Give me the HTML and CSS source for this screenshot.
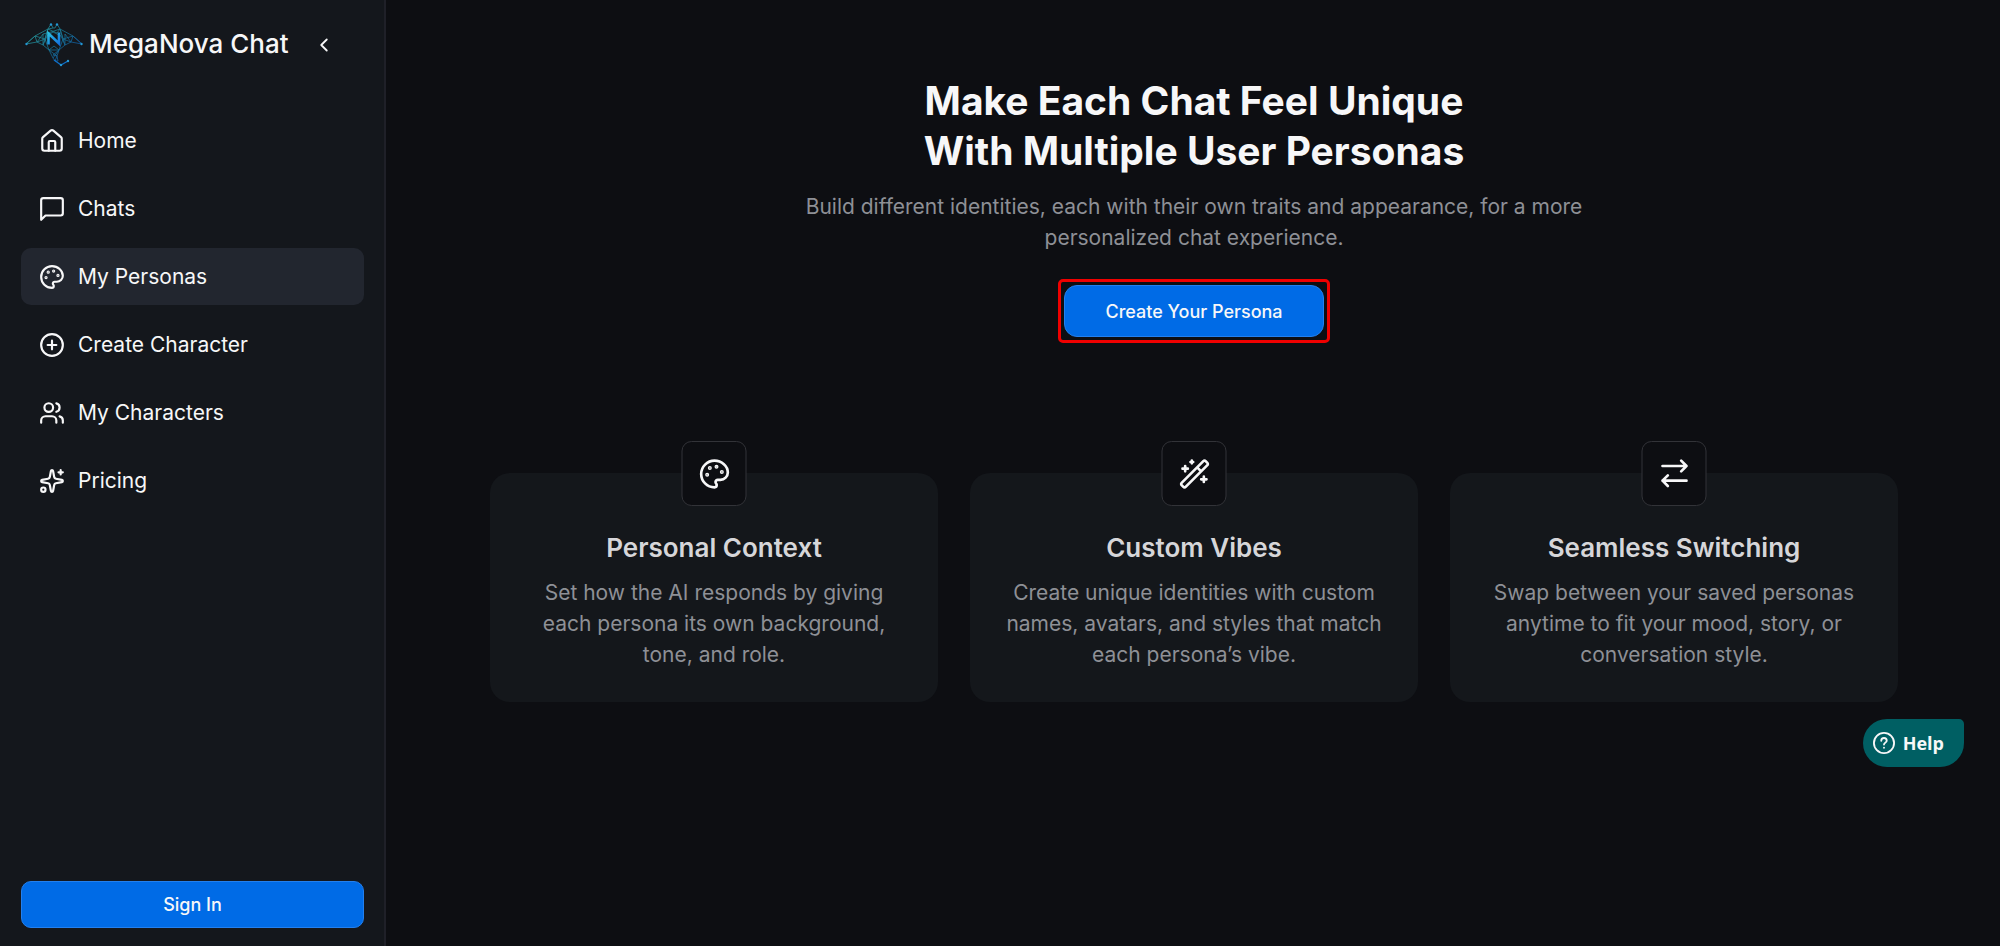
FILE: index.html
```html
<!DOCTYPE html>
<html lang="en">
<head>
    <meta charset="UTF-8">
    <meta name="viewport" content="width=device-width, initial-scale=1.0">
    <title>MegaNova Chat</title>
    <link rel="stylesheet" href="styles.css">
</head>
<body>
    <aside class="sidebar">
        <div class="brand">
            <svg class="logo" viewBox="0 0 58 44" fill="none">
                <defs>
                    <linearGradient id="ray" gradientUnits="userSpaceOnUse" x1="8" y1="0" x2="48" y2="40">
                        <stop offset="0" stop-color="#2fc4c0"/>
                        <stop offset="0.5" stop-color="#1a93b8"/>
                        <stop offset="1" stop-color="#0a5fd0"/>
                    </linearGradient>
                    <linearGradient id="mark" gradientUnits="userSpaceOnUse" x1="23" y1="9" x2="34" y2="22">
                        <stop offset="0" stop-color="#2cc3e0"/>
                        <stop offset="1" stop-color="#1270e0"/>
                    </linearGradient>
                </defs>
                <g stroke="url(#ray)" stroke-width="0.8" opacity="0.75">
                    <path d="M1 21 10 13 23 6 26 1 28 5 30 5 32 1 35 6 48 13 57 21"/>
                    <path d="M1 21 12 19 18 22 24 27 28 35 30 38"/>
                    <path d="M57 21 46 19 40 22 34 27 32 33 33 38"/>
                    <path d="M1 21 10 13 12 19 18 11 18 22 23 6 20 16 10 13M18 11 26 9 35 6 32 10 23 6 28 5M18 22 22 13 28 9 36 13 40 22M57 21 48 13 46 19 40 11 40 22 35 6 38 16 48 13M20 16 24 27 34 27 38 16M24 27 29 23 34 27 28 32 32 33 30 38 33 38M12 19 20 16M46 19 38 16M24 27 32 33M34 27 28 35"/>
                </g>
                <path d="M29 37 36 42 43 38" stroke="#0f6fc8" stroke-width="1.400"/>
                <path d="M23.500 21.500V10.500L34 20.500V9.500" stroke="url(#mark)" stroke-width="2.600"/>
                <g fill="#2398d4">
                    <circle cx="1.500" cy="21" r="1.200"/><circle cx="56.500" cy="21" r="1.200"/>
                    <circle cx="26" cy="1.500" r="1.200"/><circle cx="32" cy="1.500" r="1.200"/>
                    <circle cx="36" cy="42" r="1.200"/><circle cx="43" cy="38" r="1.200"/>
                </g>
            </svg>
            <span class="brand-name">MegaNova Chat</span>
            <button class="collapse" type="button" aria-label="Collapse sidebar">
                <svg class="icon" viewBox="0 0 24 24"><path d="m15 18-6-6 6-6"/></svg>
            </button>
        </div>

        <nav class="menu">
            <a href="#">
                <svg class="icon" viewBox="0 0 24 24"><path d="M15 21v-8a1 1 0 0 0-1-1h-4a1 1 0 0 0-1 1v8"/><path d="M3 10a2 2 0 0 1 .709-1.528l7-5.999a2 2 0 0 1 2.582 0l7 5.999A2 2 0 0 1 21 10v9a2 2 0 0 1-2 2H5a2 2 0 0 1-2-2z"/></svg>
                Home
            </a>
            <a href="#">
                <svg class="icon" viewBox="0 0 24 24"><path d="M22 4v12a2 2 0 0 1-2 2H6l-4 4V4a2 2 0 0 1 2-2h16a2 2 0 0 1 2 2z"/></svg>
                Chats
            </a>
            <a href="#" class="active">
                <svg class="icon" viewBox="0 0 24 24"><g class="dots"><circle cx="13.500" cy="6.500" r=".5"/><circle cx="17.500" cy="10.500" r=".5"/><circle cx="8.500" cy="7.500" r=".5"/><circle cx="6.500" cy="12.500" r=".5"/></g><path d="M12 2C6.500 2 2 6.500 2 12s4.500 10 10 10c.926 0 1.648-.746 1.648-1.688 0-.437-.18-.835-.437-1.125-.29-.289-.438-.652-.438-1.125a1.640 1.640 0 0 1 1.668-1.668h1.996c3.051 0 5.555-2.503 5.555-5.554C21.965 6.012 17.461 2 12 2z"/></svg>
                My Personas
            </a>
            <a href="#">
                <svg class="icon" viewBox="0 0 24 24"><circle cx="12" cy="12" r="10"/><path d="M8 12h8M12 8v8"/></svg>
                Create Character
            </a>
            <a href="#">
                <svg class="icon" viewBox="0 0 24 24"><path d="M16 21v-2a4 4 0 0 0-4-4H6a4 4 0 0 0-4 4v2"/><circle cx="9" cy="7" r="4"/><path d="M22 21v-2a4 4 0 0 0-3-3.870M16 3.130a4 4 0 0 1 0 7.750"/></svg>
                My Characters
            </a>
            <a href="#">
                <svg class="icon" viewBox="0 0 24 24"><path d="M11.017 2.814a1 1 0 0 1 1.966 0l1.051 5.558a2 2 0 0 0 1.594 1.594l5.558 1.051a1 1 0 0 1 0 1.966l-5.558 1.051a2 2 0 0 0-1.594 1.594l-1.051 5.558a1 1 0 0 1-1.966 0l-1.051-5.558a2 2 0 0 0-1.594-1.594l-5.558-1.051a1 1 0 0 1 0-1.966l5.558-1.051a2 2 0 0 0 1.594-1.594z"/><path d="M20 2v4M22 4h-4"/><circle cx="4" cy="20" r="2"/></svg>
                Pricing
            </a>
        </nav>

        <button class="btn sign-in" type="button">Sign In</button>
    </aside>

    <main>
        <section class="hero">
            <h1>Make Each Chat Feel Unique<br>With Multiple User Personas</h1>
            <p>Build different identities, each with their own traits and appearance, for a more personalized chat experience.</p>
            <div class="highlight">
                <button class="btn create" type="button">Create Your Persona</button>
            </div>
        </section>

        <section class="features">
            <article class="card">
                <div class="card-icon">
                    <svg class="icon" viewBox="0 0 24 24"><g class="dots"><circle cx="13.500" cy="6.500" r=".5"/><circle cx="17.500" cy="10.500" r=".5"/><circle cx="8.500" cy="7.500" r=".5"/><circle cx="6.500" cy="12.500" r=".5"/></g><path d="M12 2C6.500 2 2 6.500 2 12s4.500 10 10 10c.926 0 1.648-.746 1.648-1.688 0-.437-.18-.835-.437-1.125-.29-.289-.438-.652-.438-1.125a1.640 1.640 0 0 1 1.668-1.668h1.996c3.051 0 5.555-2.503 5.555-5.554C21.965 6.012 17.461 2 12 2z"/></svg>
                </div>
                <h2>Personal Context</h2>
                <p>Set how the AI responds by giving each persona its own background, tone, and role.</p>
            </article>
            <article class="card">
                <div class="card-icon">
                    <svg class="icon" viewBox="0 0 24 24"><path d="m21.640 3.640-1.280-1.280a1.210 1.210 0 0 0-1.720 0L2.360 18.640a1.210 1.210 0 0 0 0 1.720l1.280 1.280a1.200 1.200 0 0 0 1.720 0L21.640 5.360a1.200 1.200 0 0 0 0-1.720M14 7l3 3M5 6v4M19 14v4M10 2v2M7 8H3M21 16h-4M11 3H9"/></svg>
                </div>
                <h2>Custom Vibes</h2>
                <p>Create unique identities with custom names, avatars, and styles that match each persona’s vibe.</p>
            </article>
            <article class="card">
                <div class="card-icon">
                    <svg class="icon" viewBox="0 0 24 24"><path d="m17 2 4 4-4 4M3 6h18M7 21l-4-4 4-4M21 17H3"/></svg>
                </div>
                <h2>Seamless Switching</h2>
                <p>Swap between your saved personas anytime to fit your mood, story, or conversation style.</p>
            </article>
        </section>
    </main>

    <button class="help" type="button">
        <svg class="icon" viewBox="0 0 24 24"><circle cx="12" cy="12" r="11"/><path d="M9 9.500a3 3 0 0 1 6 0c0 2-3 2.200-3 4.200M12 17v.2"/></svg>
        Help
    </button>
</body>
</html>
```
FILE: styles.css
```css
* {
    box-sizing: border-box;
}

body {
    margin: 0;
    min-height: 100vh;
    display: flex;
    background: #0d0e12;
    color: #f7f7f8;
    font-family: Inter, "Liberation Sans", sans-serif;
    font-size: 21px;
}

button {
    font-family: inherit;
    cursor: pointer;
}

h1, h2, p {
    margin: 0;
}

.icon {
    flex: none;
    width: 26px;
    height: 26px;
    fill: none;
    stroke: currentColor;
    stroke-width: 2;
    stroke-linecap: round;
    stroke-linejoin: round;
}

.dots {
    fill: currentColor;
}

/* Sidebar */
.sidebar {
    flex: none;
    width: 386px;
    padding: 20px 20px 18px 21px;
    display: flex;
    flex-direction: column;
    background: #14171c;
    border-right: 2px solid #1f2028;
}

.brand {
    display: flex;
    align-items: center;
    height: 50px;
    padding-left: 4px;
}

.logo {
    width: 58px;
    height: 44px;
}

.brand-name {
    margin-left: 6px;
    padding-bottom: 4px;
    font-size: 26px;
    font-weight: 500;
}

.collapse {
    display: flex;
    margin-left: 24px;
    padding: 0;
    border: 0;
    background: none;
    color: #f7f7f8;
}

.collapse .icon {
    width: 22px;
    height: 22px;
}

.menu {
    display: flex;
    flex-direction: column;
    gap: 11px;
    margin-top: 42px;
}

.menu a {
    display: flex;
    align-items: center;
    gap: 13px;
    height: 57px;
    padding: 0 18px;
    border-radius: 10px;
    color: #f7f7f8;
    text-decoration: none;
}

.menu .active {
    background: #22262f;
}

.btn {
    border: 1px solid #2380ee;
    background: #006be6;
    color: #f7f7f8;
    font-size: 18px;
    font-weight: 500;
}

.sign-in {
    height: 47px;
    margin-top: auto;
    border-radius: 10px;
}

/* Main content */
main {
    flex: 1;
    padding: 76px 102px 76px 104px;
}

.hero {
    display: flex;
    flex-direction: column;
    align-items: center;
    text-align: center;
}

.hero h1 {
    font-size: 39px;
    font-weight: 700;
    line-height: 50px;
}

.hero p {
    max-width: 800px;
    margin-top: 15px;
    color: #8e9096;
    line-height: 31px;
}

.highlight {
    margin-top: 26px;
    padding: 3px;
    border: 3px solid #f00000;
    border-radius: 5px;
}

.create {
    display: block;
    height: 52px;
    padding: 0 40px;
    border-radius: 13px;
}

.features {
    display: grid;
    grid-template-columns: repeat(3, 1fr);
    gap: 32px;
    margin-top: 130px;
}

.card {
    position: relative;
    padding: 59px 34px 32px;
    border-radius: 20px;
    background: #14171b;
    text-align: center;
}

/* Sits half over the card's top edge */
.card-icon {
    position: absolute;
    top: -32px;
    left: 50%;
    transform: translateX(-50%);
    display: flex;
    align-items: center;
    justify-content: center;
    width: 65px;
    height: 65px;
    border: 1px solid #323338;
    border-radius: 10px;
    background: #0d0e12;
}

.card-icon .icon {
    width: 32px;
    height: 32px;
}

.card h2 {
    color: #d6d6d9;
    font-size: 26px;
    font-weight: 600;
    line-height: 32px;
}

.card p {
    margin-top: 13px;
    color: #8e9096;
    line-height: 31px;
}

/* Floating help button */
.help {
    position: fixed;
    right: 36px;
    bottom: 179px;
    display: flex;
    align-items: center;
    gap: 8px;
    height: 48px;
    padding: 0 20px 0 10px;
    border: 0;
    border-radius: 24px 5px 24px 24px;
    background: #005f63;
    color: #f7f7f8;
    font-family: "Open Sans", "Noto Sans", sans-serif;
    font-size: 18px;
    font-weight: 700;
}

.help .icon {
    width: 22px;
    height: 22px;
}
```
